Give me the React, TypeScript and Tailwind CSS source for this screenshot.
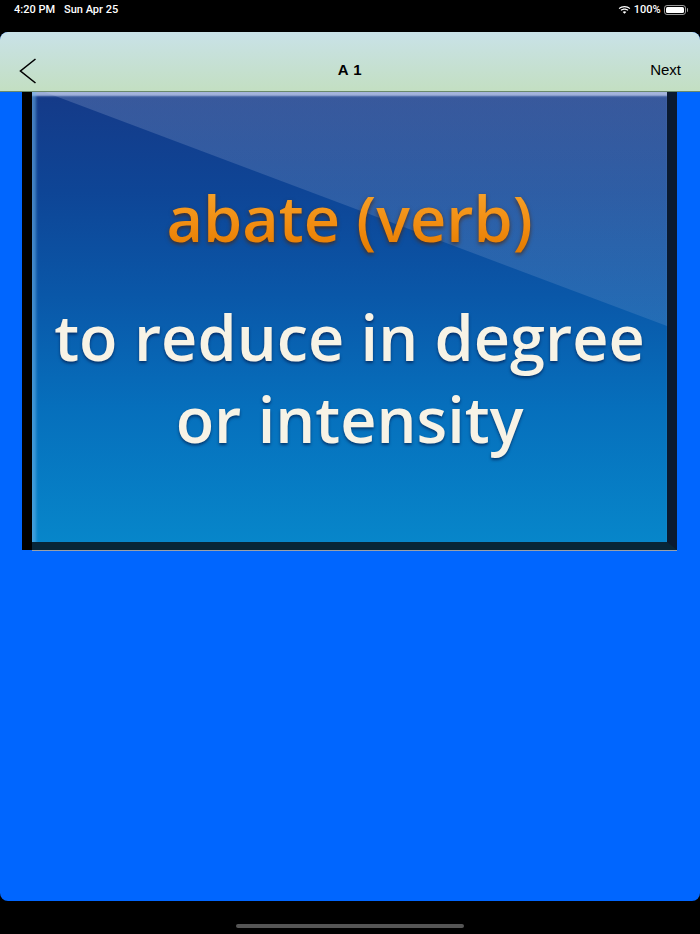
import React from "react";

function Wifi() {
  return (
    <svg width="13" height="10" viewBox="0 0 13 10" fill="white">
      <path d="M6.5 2.2c1.9 0 3.6.7 4.9 1.9l.9-.9C10.8 1.8 8.7.9 6.5.9S2.2 1.8.7 3.2l.9.9C2.9 2.9 4.6 2.2 6.5 2.2z" />
      <path d="M6.5 4.7c1.2 0 2.2.4 3 1.1l.9-.9C9.3 3.9 8 3.4 6.5 3.4S3.7 3.9 2.6 4.9l.9.9c.8-.7 1.8-1.1 3-1.1z" />
      <path d="M6.5 6.2c-.7 0-1.3.3-1.8.7L6.5 8.8l1.8-1.9c-.5-.4-1.1-.7-1.8-.7z" />
    </svg>
  );
}

function Battery() {
  return (
    <div className="flex items-center">
      <div className="w-[22px] h-[10px] rounded-[3px] border border-white/60 p-[1px]">
        <div className="w-full h-full rounded-[1.5px] bg-white" />
      </div>
      <div className="w-[1.5px] h-[4px] rounded-r-sm bg-white/60 ml-[1px]" />
    </div>
  );
}

export default function App() {
  return (
    <div className="w-[700px] h-[934px] bg-black flex flex-col font-['Liberation_Sans',sans-serif]">
      {/* status bar */}
      <div className="h-[32px] flex items-start justify-between pl-[14px] pr-[12px] pt-[3px] text-white text-[11px] font-medium font-['Roboto',sans-serif]">
        <div className="flex gap-[9px] leading-[13px]">
          <span>4:20 PM</span>
          <span>Sun Apr 25</span>
        </div>
        <div className="flex items-center gap-[3px] leading-[13px]">
          <Wifi />
          <span>100%</span>
          <Battery />
        </div>
      </div>

      {/* app window */}
      <div className="h-[869px] rounded-[8px] overflow-hidden bg-[#0066ff] flex flex-col">
        {/* nav */}
        <div className="h-[60px] shrink-0 bg-[linear-gradient(180deg,#c9e2e8_0%,#c3dfc2_100%)] border-b border-[#6b8a6b] flex items-end pb-[8px] px-[18px] relative">
          <svg width="20" height="26" viewBox="0 0 20 26" className="mb-[-1px]">
            <path d="M17.5 1 L2.5 13 L17.5 25" stroke="black" strokeWidth="1.6" fill="none" />
          </svg>
          <div className="absolute left-0 right-0 bottom-[10px] text-center text-[15px] font-bold text-black tracking-[0.5px]">A 1</div>
          <div className="ml-auto mb-[2px] mr-[1px] text-[15px] text-black">Next</div>
        </div>

        {/* card */}
        <div className="ml-[22px] w-[655px] h-[458px] bg-black pl-[10px] flex">
          <div className="flex-1 flex flex-col border-r-[10px] border-r-[#0a1a30] border-b-[8px] border-b-[#082638]">
            <div className="flex-1 relative overflow-hidden bg-[linear-gradient(180deg,#153a88_0%,#0e4596_22%,#0a57a8_45%,#066fbc_70%,#0786ca_100%)] shadow-[inset_6px_0_3px_-2px_rgba(110,180,235,0.55),inset_0_5px_2px_-1px_rgba(180,195,230,0.85)]">
              <div className="absolute inset-0 [clip-path:polygon(2%_0,100%_0,100%_52%)] bg-[linear-gradient(180deg,rgba(200,210,235,0.2)_0%,rgba(200,210,235,0.08)_100%)]" />
              <div className="relative flex flex-col items-center pt-[90px] font-['Open_Sans',sans-serif] font-semibold">
                <div className="text-[63px] leading-[72px] bg-[linear-gradient(180deg,#f8a830_0%,#f18c10_60%,#e27a00_100%)] bg-clip-text text-transparent drop-shadow-[0_2px_2px_rgba(80,35,0,0.75)]">
                  abate (verb)
                </div>
                <div className="mt-[42px] text-[63px] leading-[82px] text-center text-[#f7f3e6] [text-shadow:0_2px_3px_rgba(0,10,50,0.55)]">
                  to reduce in degree
                  <br />
                  or intensity
                </div>
              </div>
            </div>
          </div>
        </div>
        <div className="ml-[32px] w-[645px] h-[1px] bg-[#9aa0a8]" />
      </div>

      {/* home indicator */}
      <div className="flex-1 flex items-end justify-center pb-[6px]">
        <div className="w-[228px] h-[4px] rounded-full bg-[#555]" />
      </div>
    </div>
  );
}
